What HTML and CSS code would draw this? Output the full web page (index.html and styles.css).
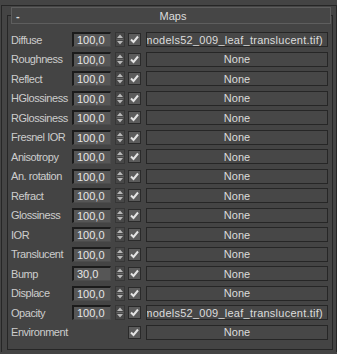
FILE: index.html
```html
<!DOCTYPE html>
<html>
<head>
    <title>Maps</title>
    <link rel="stylesheet" href="styles.css">
</head>
<body>
    <div class="rollout">
        <div class="group">
            <div class="header">
                <span class="collapse">-</span>
                <span class="title">Maps</span>
            </div>
            <div class="rows">
                <div class="row">
                    <span class="label">Diffuse</span>
                    <span class="field">100,0</span>
                    <span class="spinner"><svg width="10" height="15" viewBox="0 0 10 15"><path d="M5 2.5 L8 6 L2 6 Z M5 12.5 L8 9 L2 9 Z" fill="#b8b8b8"/><path d="M1.5 7.5 H8.5" stroke="#666" stroke-width="1"/></svg></span>
                    <span class="check"><svg width="11" height="11" viewBox="0 0 11 11"><path d="M2 5.5 L4.5 8 L9 2.5" fill="none" stroke="#e4e4e4" stroke-width="2"/></svg></span>
                    <span class="map long"><span>Map #7 (3dmodels52_009_leaf_translucent.tif)</span></span>
                </div>
                <div class="row">
                    <span class="label">Roughness</span>
                    <span class="field">100,0</span>
                    <span class="spinner"><svg width="10" height="15" viewBox="0 0 10 15"><path d="M5 2.5 L8 6 L2 6 Z M5 12.5 L8 9 L2 9 Z" fill="#b8b8b8"/><path d="M1.5 7.5 H8.5" stroke="#666" stroke-width="1"/></svg></span>
                    <span class="check"><svg width="11" height="11" viewBox="0 0 11 11"><path d="M2 5.5 L4.5 8 L9 2.5" fill="none" stroke="#e4e4e4" stroke-width="2"/></svg></span>
                    <span class="map"><span>None</span></span>
                </div>
                <div class="row">
                    <span class="label">Reflect</span>
                    <span class="field">100,0</span>
                    <span class="spinner"><svg width="10" height="15" viewBox="0 0 10 15"><path d="M5 2.5 L8 6 L2 6 Z M5 12.5 L8 9 L2 9 Z" fill="#b8b8b8"/><path d="M1.5 7.5 H8.5" stroke="#666" stroke-width="1"/></svg></span>
                    <span class="check"><svg width="11" height="11" viewBox="0 0 11 11"><path d="M2 5.5 L4.5 8 L9 2.5" fill="none" stroke="#e4e4e4" stroke-width="2"/></svg></span>
                    <span class="map"><span>None</span></span>
                </div>
                <div class="row">
                    <span class="label">HGlossiness</span>
                    <span class="field">100,0</span>
                    <span class="spinner"><svg width="10" height="15" viewBox="0 0 10 15"><path d="M5 2.5 L8 6 L2 6 Z M5 12.5 L8 9 L2 9 Z" fill="#b8b8b8"/><path d="M1.5 7.5 H8.5" stroke="#666" stroke-width="1"/></svg></span>
                    <span class="check"><svg width="11" height="11" viewBox="0 0 11 11"><path d="M2 5.5 L4.5 8 L9 2.5" fill="none" stroke="#e4e4e4" stroke-width="2"/></svg></span>
                    <span class="map"><span>None</span></span>
                </div>
                <div class="row">
                    <span class="label">RGlossiness</span>
                    <span class="field">100,0</span>
                    <span class="spinner"><svg width="10" height="15" viewBox="0 0 10 15"><path d="M5 2.5 L8 6 L2 6 Z M5 12.5 L8 9 L2 9 Z" fill="#b8b8b8"/><path d="M1.5 7.5 H8.5" stroke="#666" stroke-width="1"/></svg></span>
                    <span class="check"><svg width="11" height="11" viewBox="0 0 11 11"><path d="M2 5.5 L4.5 8 L9 2.5" fill="none" stroke="#e4e4e4" stroke-width="2"/></svg></span>
                    <span class="map"><span>None</span></span>
                </div>
                <div class="row">
                    <span class="label">Fresnel IOR</span>
                    <span class="field">100,0</span>
                    <span class="spinner"><svg width="10" height="15" viewBox="0 0 10 15"><path d="M5 2.5 L8 6 L2 6 Z M5 12.5 L8 9 L2 9 Z" fill="#b8b8b8"/><path d="M1.5 7.5 H8.5" stroke="#666" stroke-width="1"/></svg></span>
                    <span class="check"><svg width="11" height="11" viewBox="0 0 11 11"><path d="M2 5.5 L4.5 8 L9 2.5" fill="none" stroke="#e4e4e4" stroke-width="2"/></svg></span>
                    <span class="map"><span>None</span></span>
                </div>
                <div class="row">
                    <span class="label">Anisotropy</span>
                    <span class="field">100,0</span>
                    <span class="spinner"><svg width="10" height="15" viewBox="0 0 10 15"><path d="M5 2.5 L8 6 L2 6 Z M5 12.5 L8 9 L2 9 Z" fill="#b8b8b8"/><path d="M1.5 7.5 H8.5" stroke="#666" stroke-width="1"/></svg></span>
                    <span class="check"><svg width="11" height="11" viewBox="0 0 11 11"><path d="M2 5.5 L4.5 8 L9 2.5" fill="none" stroke="#e4e4e4" stroke-width="2"/></svg></span>
                    <span class="map"><span>None</span></span>
                </div>
                <div class="row">
                    <span class="label">An. rotation</span>
                    <span class="field">100,0</span>
                    <span class="spinner"><svg width="10" height="15" viewBox="0 0 10 15"><path d="M5 2.5 L8 6 L2 6 Z M5 12.5 L8 9 L2 9 Z" fill="#b8b8b8"/><path d="M1.5 7.5 H8.5" stroke="#666" stroke-width="1"/></svg></span>
                    <span class="check"><svg width="11" height="11" viewBox="0 0 11 11"><path d="M2 5.5 L4.5 8 L9 2.5" fill="none" stroke="#e4e4e4" stroke-width="2"/></svg></span>
                    <span class="map"><span>None</span></span>
                </div>
                <div class="row">
                    <span class="label">Refract</span>
                    <span class="field">100,0</span>
                    <span class="spinner"><svg width="10" height="15" viewBox="0 0 10 15"><path d="M5 2.5 L8 6 L2 6 Z M5 12.5 L8 9 L2 9 Z" fill="#b8b8b8"/><path d="M1.5 7.5 H8.5" stroke="#666" stroke-width="1"/></svg></span>
                    <span class="check"><svg width="11" height="11" viewBox="0 0 11 11"><path d="M2 5.5 L4.5 8 L9 2.5" fill="none" stroke="#e4e4e4" stroke-width="2"/></svg></span>
                    <span class="map"><span>None</span></span>
                </div>
                <div class="row">
                    <span class="label">Glossiness</span>
                    <span class="field">100,0</span>
                    <span class="spinner"><svg width="10" height="15" viewBox="0 0 10 15"><path d="M5 2.5 L8 6 L2 6 Z M5 12.5 L8 9 L2 9 Z" fill="#b8b8b8"/><path d="M1.5 7.5 H8.5" stroke="#666" stroke-width="1"/></svg></span>
                    <span class="check"><svg width="11" height="11" viewBox="0 0 11 11"><path d="M2 5.5 L4.5 8 L9 2.5" fill="none" stroke="#e4e4e4" stroke-width="2"/></svg></span>
                    <span class="map"><span>None</span></span>
                </div>
                <div class="row">
                    <span class="label">IOR</span>
                    <span class="field">100,0</span>
                    <span class="spinner"><svg width="10" height="15" viewBox="0 0 10 15"><path d="M5 2.5 L8 6 L2 6 Z M5 12.5 L8 9 L2 9 Z" fill="#b8b8b8"/><path d="M1.5 7.5 H8.5" stroke="#666" stroke-width="1"/></svg></span>
                    <span class="check"><svg width="11" height="11" viewBox="0 0 11 11"><path d="M2 5.5 L4.5 8 L9 2.5" fill="none" stroke="#e4e4e4" stroke-width="2"/></svg></span>
                    <span class="map"><span>None</span></span>
                </div>
                <div class="row">
                    <span class="label">Translucent</span>
                    <span class="field">100,0</span>
                    <span class="spinner"><svg width="10" height="15" viewBox="0 0 10 15"><path d="M5 2.5 L8 6 L2 6 Z M5 12.5 L8 9 L2 9 Z" fill="#b8b8b8"/><path d="M1.5 7.5 H8.5" stroke="#666" stroke-width="1"/></svg></span>
                    <span class="check"><svg width="11" height="11" viewBox="0 0 11 11"><path d="M2 5.5 L4.5 8 L9 2.5" fill="none" stroke="#e4e4e4" stroke-width="2"/></svg></span>
                    <span class="map"><span>None</span></span>
                </div>
                <div class="row">
                    <span class="label">Bump</span>
                    <span class="field">30,0</span>
                    <span class="spinner"><svg width="10" height="15" viewBox="0 0 10 15"><path d="M5 2.5 L8 6 L2 6 Z M5 12.5 L8 9 L2 9 Z" fill="#b8b8b8"/><path d="M1.5 7.5 H8.5" stroke="#666" stroke-width="1"/></svg></span>
                    <span class="check"><svg width="11" height="11" viewBox="0 0 11 11"><path d="M2 5.5 L4.5 8 L9 2.5" fill="none" stroke="#e4e4e4" stroke-width="2"/></svg></span>
                    <span class="map"><span>None</span></span>
                </div>
                <div class="row">
                    <span class="label">Displace</span>
                    <span class="field">100,0</span>
                    <span class="spinner"><svg width="10" height="15" viewBox="0 0 10 15"><path d="M5 2.5 L8 6 L2 6 Z M5 12.5 L8 9 L2 9 Z" fill="#b8b8b8"/><path d="M1.5 7.5 H8.5" stroke="#666" stroke-width="1"/></svg></span>
                    <span class="check"><svg width="11" height="11" viewBox="0 0 11 11"><path d="M2 5.5 L4.5 8 L9 2.5" fill="none" stroke="#e4e4e4" stroke-width="2"/></svg></span>
                    <span class="map"><span>None</span></span>
                </div>
                <div class="row">
                    <span class="label">Opacity</span>
                    <span class="field">100,0</span>
                    <span class="spinner"><svg width="10" height="15" viewBox="0 0 10 15"><path d="M5 2.5 L8 6 L2 6 Z M5 12.5 L8 9 L2 9 Z" fill="#b8b8b8"/><path d="M1.5 7.5 H8.5" stroke="#666" stroke-width="1"/></svg></span>
                    <span class="check"><svg width="11" height="11" viewBox="0 0 11 11"><path d="M2 5.5 L4.5 8 L9 2.5" fill="none" stroke="#e4e4e4" stroke-width="2"/></svg></span>
                    <span class="map long"><span>Map #8 (3dmodels52_009_leaf_translucent.tif)</span></span>
                </div>
                <div class="row">
                    <span class="label">Environment</span>
                    <span class="field empty"></span>
                    <span class="spinner empty"></span>
                    <span class="check"><svg width="11" height="11" viewBox="0 0 11 11"><path d="M2 5.5 L4.5 8 L9 2.5" fill="none" stroke="#e4e4e4" stroke-width="2"/></svg></span>
                    <span class="map"><span>None</span></span>
                </div>
            </div>
        </div>
    </div>
</body>
</html>
```

FILE: styles.css
```css
body {
    margin: 0;
    background-color: #444444;
    font-family: "Liberation Sans", Arial, sans-serif;
    font-size: 11px;
    color: #cdcdcd;
}
.rollout {
    margin: 5px 0 0 1px;
    height: 347px;
    padding: 9px 3px 0 5px;
    border-top: 1px solid #262626;
    border-left: 1px solid #262626;
    border-right: 1px solid #262626;
    box-sizing: border-box;
}
.group {
    height: 335px;
    border: 1px solid #262626;
    box-sizing: border-box;
}
.header {
    display: flex;
    align-items: center;
    height: 17px;
    margin: -9px 1px 0 3px;
    border: 1px solid #5e5e5e;
    background: #464646;
    box-sizing: border-box;
    color: #dcdcdc;
}
.collapse {
    width: 0;
    padding-left: 4px;
    font-weight: bold;
}
.title {
    flex: 1;
    text-align: center;
}
.rows {
    margin-top: 6px;
    padding-left: 3px;
}
.row {
    display: flex;
    align-items: center;
    height: 19.5px;
}
.label {
    width: 61px;
    white-space: nowrap;
    flex-shrink: 0;
    letter-spacing: -0.45px;
}
.field {
    width: 39px;
    height: 15px;
    box-sizing: border-box;
    border-top: 2px solid #1b1b1b;
    border-left: 2px solid #1b1b1b;
    border-right: 1px solid #4c4c4c;
    border-bottom: 1px solid #4c4c4c;
    background: #565656;
    color: #e6e6e6;
    padding-left: 3px;
    line-height: 12px;
}
.spinner {
    width: 10px;
    height: 15px;
    margin-left: 4px;
    display: flex;
    background: #474747;
    box-shadow: inset 0 0 0 1px #363636;
}
.spinner svg {
    display: block;
}
.field.empty,
.spinner.empty {
    visibility: hidden;
}
.check {
    width: 13px;
    height: 13px;
    margin-left: 3px;
    box-sizing: border-box;
    border: 1px solid #2a2a2a;
    background: #5c5c5c;
    display: flex;
}
.check svg {
    display: block;
}
.map {
    width: 182px;
    height: 15px;
    margin-left: 5px;
    box-sizing: border-box;
    border: 1px solid #262626;
    background: #474747;
    color: #dcdcdc;
    display: flex;
    justify-content: center;
    align-items: center;
    overflow: hidden;
    white-space: nowrap;
}
.map span {
    flex-shrink: 0;
}
.map.long {
    justify-content: flex-end;
    padding-right: 4px;
    letter-spacing: 0.25px;
}
```
